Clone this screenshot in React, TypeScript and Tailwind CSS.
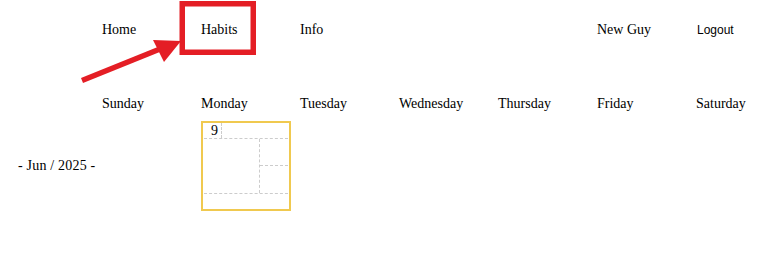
import React from 'react';

const days = ['Sunday', 'Monday', 'Tuesday', 'Wednesday', 'Thursday', 'Friday', 'Saturday'];

const DayCell: React.FC<{ day: number }> = ({ day }) => {
  return (
    <div className="w-[90px] h-[90px] border-2 border-[#f0c94f] px-[1px] flex flex-col">
      <div className="h-[16px] border-b border-dashed border-[#cccccc] flex">
        <div className="w-[18px] border-r border-dashed border-[#cccccc] text-right pr-[3px] leading-[15px]">
          {day}
        </div>
      </div>
      <div className="h-[55px] border-b border-dashed border-[#cccccc] flex">
        <div className="w-[55px]" />
        <div className="flex-1 border-l border-dashed border-[#cccccc] flex flex-col">
          <div className="h-[27px] border-b border-dashed border-[#cccccc]" />
          <div className="flex-1" />
        </div>
      </div>
    </div>
  );
};

export default function App() {
  return (
    <div className="relative w-[778px] h-[254px] overflow-hidden bg-white text-black text-[14px] leading-[16px] font-['Liberation_Serif',serif]">
      <nav className="grid grid-cols-[102px_repeat(6,99px)_1fr] h-[58px] pt-[2px] items-center">
        <div />
        <a className="cursor-pointer">Home</a>
        <a className="cursor-pointer">Habits</a>
        <a className="cursor-pointer">Info</a>
        <div />
        <div />
        <span>New Guy</span>
        <button className="text-left text-[12px] font-['Liberation_Sans',sans-serif] pl-[1px]">Logout</button>
      </nav>

      <div className="grid grid-cols-[102px_repeat(6,99px)_1fr] pt-[38px]">
        <div />
        {days.map((d) => (
          <div key={d}>{d}</div>
        ))}
      </div>

      <div className="grid grid-cols-[102px_repeat(6,99px)_1fr] mt-[9px] items-center">
        <div className="pl-[18px] whitespace-nowrap tracking-[0.2px]">- Jun / 2025 -</div>
        <div />
        <DayCell day={9} />
      </div>

      <svg className="absolute left-0 top-0 pointer-events-none" width="778" height="254" viewBox="0 0 778 254">
        <rect x="182.25" y="3.75" width="71" height="48.5" fill="none" stroke="#e41e25" strokeWidth="5.5" />
        <line x1="82" y1="80.5" x2="160" y2="49" stroke="#e41e25" strokeWidth="5.5" />
        <polygon points="181,41 153,40 164,62" fill="#e41e25" />
      </svg>
    </div>
  );
}
